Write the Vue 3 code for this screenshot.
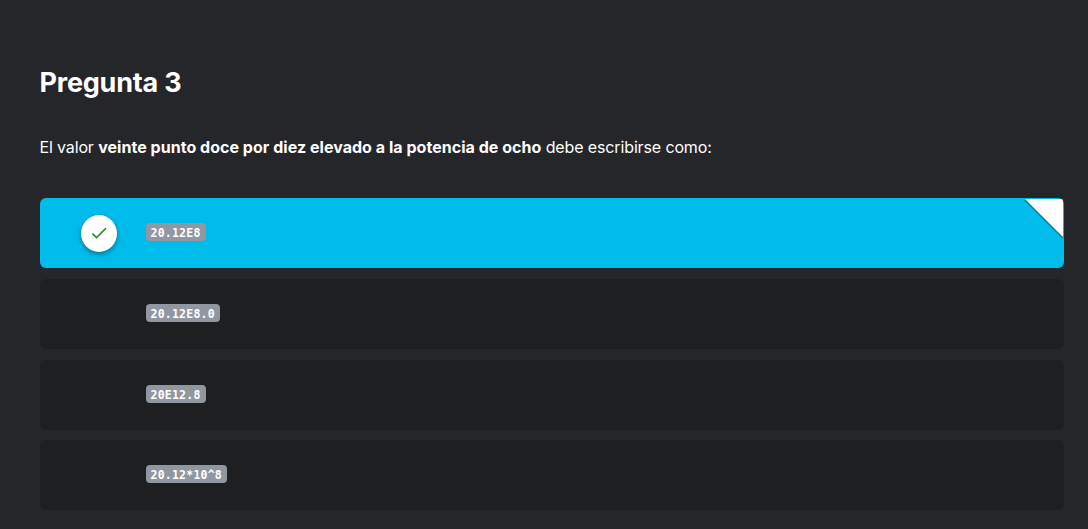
<script setup>
const answers = [
  { text: '20.12E8', selected: true },
  { text: '20.12E8.0' },
  { text: '20E12.8' },
  { text: '20.12*10^8' },
]
</script>

<template>
  <main class="page">
    <h1>Pregunta 3</h1>
    <p class="prompt">El valor <b>veinte punto doce por diez elevado a la potencia de ocho</b> debe escribirse como:</p>
    <ul class="answers">
      <li v-for="a in answers" :key="a.text" class="answer" :class="{ selected: a.selected }">
        <span class="mark">
          <span v-if="a.selected" class="disc">
            <svg width="20" height="20" viewBox="0 0 24 24"><path d="M9 16.17 4.83 12l-1.42 1.41L9 19 21 7l-1.41-1.41z" /></svg>
          </span>
        </span>
        <code>{{ a.text }}</code>
        <svg v-if="a.selected" class="corner" width="40" height="40" viewBox="0 0 40 40">
          <path class="fold-shadow" d="M1 1.5 39 39.5" />
          <path class="fold" d="M1 1H37Q39 1 39 3V39Z" />
        </svg>
      </li>
    </ul>
  </main>
</template>

<style>
body { background: #25262a; }
</style>
<style scoped>
.page { box-sizing: border-box; height: 529px; padding: 65px 24px 0 40px; background: #25262a; color: #fff; font-family: Inter, sans-serif; overflow: hidden; }
h1 { margin: 0 0 0 -.5px; font-size: 27px; line-height: 36px; font-weight: 700; letter-spacing: -.22px; white-space: nowrap; }
.prompt { margin: 34px 0 0 -.6px; font-size: 16px; line-height: 24px; letter-spacing: -.13px; white-space: nowrap; }
.prompt b { letter-spacing: .035px; }
.answers { list-style: none; margin: 39px 0 0; padding: 0; display: flex; flex-direction: column; gap: 10.75px; }
.answer { position: relative; display: flex; align-items: flex-start; height: 70px; border-radius: 6px; background: #1e1f21; }
.selected { background: #00bceb; }
.mark { width: 106px; box-sizing: border-box; padding: 17px 0 0 41px; }
.disc { box-sizing: border-box; display: flex; align-items: center; justify-content: center; width: 36px; height: 37px; padding-bottom: 1px; border-radius: 50%; background: #fff; box-shadow: 0 2px 5px rgba(0, 0, 0, .4); }
.disc path { fill: #2b8527; }
code { height: 18px; margin-top: 25px; padding: 0 5.4px 0 4.5px; border-radius: 4px; background: #9197a1; font: 700 11.5px/20px "DejaVu Sans Mono", monospace; letter-spacing: .225px; }
.corner { position: absolute; top: 0; right: 0; }
.fold { fill: #fff; }
.fold-shadow { stroke: #087f9f; stroke-width: 2.5; opacity: .8; }
</style>
